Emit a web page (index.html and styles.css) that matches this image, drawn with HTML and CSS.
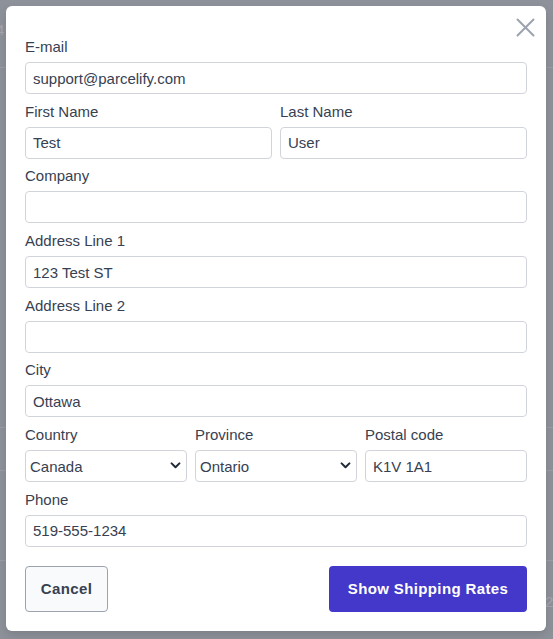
FILE: index.html
```html
<!DOCTYPE html>
<html lang="en">
<head>
<meta charset="utf-8">
<title>Shipping address</title>
<link rel="stylesheet" href="styles.css">
</head>
<body>
<div class="backdrop">
  <span class="bg-digit bg-digit-a">4</span>
  <span class="bg-digit bg-digit-b">2</span>
  <div class="bg-line bg-line-1"></div>
  <div class="bg-line bg-line-2"></div>
  <div class="bg-line bg-line-3"></div>
  <div class="bg-line bg-line-4"></div>
</div>
<div class="overlay">
  <form class="modal">
    <button type="button" class="close" aria-label="Close">
      <svg width="19" height="19" viewBox="0 0 19 19"><path d="M1.5 1.5 L17.5 17.5 M17.5 1.5 L1.5 17.5" stroke="#9ca3af" stroke-width="2" stroke-linecap="round" fill="none"/></svg>
    </button>
    <div class="fields">
      <label class="field">
        <span class="label">E-mail</span>
        <input class="input" type="text" value="support@parcelify.com">
      </label>
      <div class="row two">
        <label class="field">
          <span class="label">First Name</span>
          <input class="input" type="text" value="Test">
        </label>
        <label class="field">
          <span class="label">Last Name</span>
          <input class="input" type="text" value="User">
        </label>
      </div>
      <label class="field">
        <span class="label">Company</span>
        <input class="input" type="text" value="">
      </label>
      <label class="field">
        <span class="label">Address Line 1</span>
        <input class="input" type="text" value="123 Test ST">
      </label>
      <label class="field">
        <span class="label">Address Line 2</span>
        <input class="input" type="text" value="">
      </label>
      <label class="field">
        <span class="label">City</span>
        <input class="input" type="text" value="Ottawa">
      </label>
      <div class="row three">
        <label class="field">
          <span class="label">Country</span>
          <span class="select-wrap">
            <select class="select"><option>Canada</option></select>
            <svg class="chev" width="11" height="7" viewBox="0 0 11 7"><path d="M1.6 1.4 L5.5 5.2 L9.4 1.4" stroke="#1f2937" stroke-width="2" fill="none" stroke-linecap="round" stroke-linejoin="round"/></svg>
          </span>
        </label>
        <label class="field">
          <span class="label">Province</span>
          <span class="select-wrap">
            <select class="select"><option>Ontario</option></select>
            <svg class="chev" width="11" height="7" viewBox="0 0 11 7"><path d="M1.6 1.4 L5.5 5.2 L9.4 1.4" stroke="#1f2937" stroke-width="2" fill="none" stroke-linecap="round" stroke-linejoin="round"/></svg>
          </span>
        </label>
        <label class="field">
          <span class="label">Postal code</span>
          <input class="input" type="text" value="K1V 1A1">
        </label>
      </div>
      <label class="field">
        <span class="label">Phone</span>
        <input class="input" type="text" value="519-555-1234">
      </label>
    </div>
    <div class="actions">
      <button type="button" class="btn btn-cancel">Cancel</button>
      <button type="button" class="btn btn-primary">Show Shipping Rates</button>
    </div>
  </form>
</div>
</body>
</html>
```

FILE: styles.css
```css
* { box-sizing: border-box; }

html, body {
  margin: 0;
  padding: 0;
  width: 553px;
  height: 639px;
  overflow: hidden;
}

body {
  font-family: "Liberation Sans", Arial, sans-serif;
  font-size: 15px;
  color: #374151;
  background: #8d9199;
  position: relative;
}

.backdrop {
  position: absolute;
  inset: 0;
}

.bg-digit {
  position: absolute;
  font-size: 15px;
  color: #a3a6ad;
}
.bg-digit-a { left: -4px; top: 21px; }
.bg-digit-b { left: 545px; top: 593px; }

.bg-line {
  position: absolute;
  height: 1px;
  background: #9a9da4;
}
.bg-line-1 { left: 0; width: 553px; top: 67px; }
.bg-line-2 { left: 0; width: 553px; top: 427px; }
.bg-line-3 { left: 0; width: 553px; top: 470px; }
.bg-line-4 { left: 0; width: 553px; top: 560px; }

.overlay {
  position: absolute;
  inset: 0;
  padding: 6px 7px 8px 6px;
}

.modal {
  position: relative;
  width: 540px;
  height: 625px;
  background: #ffffff;
  border-radius: 6px;
  box-shadow: 0 4px 10px rgba(0, 0, 0, 0.12);
  padding: 31px 19px 19px 19px;
  display: flex;
  flex-direction: column;
}

.close {
  position: absolute;
  top: 12px;
  right: 11px;
  width: 19px;
  height: 19px;
  padding: 0;
  border: 0;
  background: transparent;
  display: flex;
}

.fields {
  display: flex;
  flex-direction: column;
  gap: 7.7px;
}

.row {
  display: grid;
  gap: 8px;
}
.row.two { grid-template-columns: 1fr 1fr; }
.row.three { grid-template-columns: 1fr 1fr 1fr; }

.field {
  display: flex;
  flex-direction: column;
  gap: 5px;
  min-width: 0;
}

.label {
  line-height: 20px;
  color: #374151;
}

.input,
.select {
  width: 100%;
  height: 32px;
  font-family: inherit;
  font-size: 15px;
  color: #374151;
  background: #ffffff;
  border: 1px solid #d1d5db;
  border-radius: 4px;
  padding: 0 7px;
  outline: none;
}

.select-wrap {
  position: relative;
  display: block;
}

.select {
  appearance: none;
  -webkit-appearance: none;
  padding: 0 24px 0 4px;
}

.chev {
  position: absolute;
  right: 6px;
  top: 12px;
  pointer-events: none;
}

.actions {
  margin-top: 19px;
  display: flex;
  justify-content: space-between;
}

.btn {
  height: 46px;
  font-family: inherit;
  font-size: 15px;
  font-weight: 700;
  letter-spacing: 0.375px;
  border-radius: 4px;
  cursor: pointer;
}

.btn-cancel {
  width: 83px;
  padding: 0;
  background: #f9fafb;
  color: #374151;
  border: 1px solid #9ca3af;
}

.btn-primary {
  width: 198px;
  padding: 0;
  background: #4338ca;
  color: #ffffff;
  border: 0;
}
```
